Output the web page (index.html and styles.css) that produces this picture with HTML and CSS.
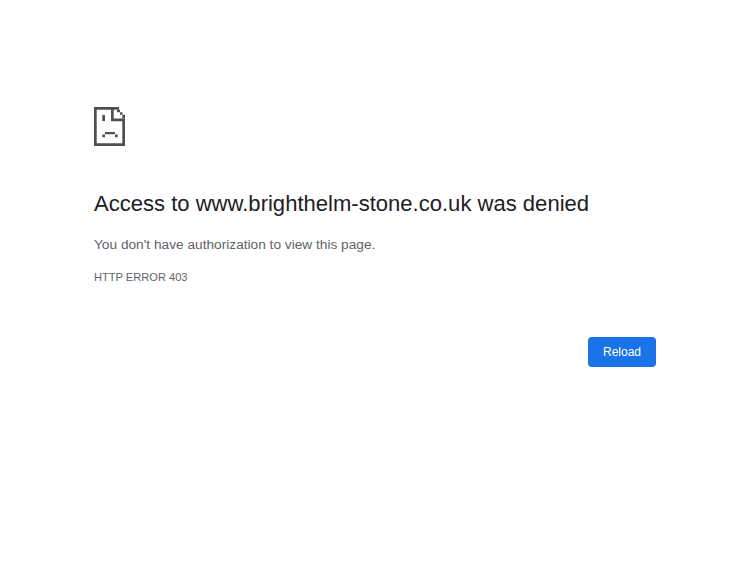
FILE: index.html
```html
<!DOCTYPE html>
<html lang="en">
<head>
<meta charset="utf-8">
<title>www.brighthelm-stone.co.uk</title>
<link rel="stylesheet" href="styles.css">
</head>
<body>
<main class="wrapper">
  <svg class="icon" width="31" height="39" viewBox="0 0 31 39" aria-hidden="true">
    <path fill="#505050" d="M0 0H25V2.7H19.7V11.5H31V39H0ZM2.7 2.7V36.3H28.3V14.2H17V2.7Z"/>
    <path fill="#505050" d="M23 2.7H26V5.2H23ZM26 5.2H28.5V7.7H26ZM28.3 7.7H31V11.5H28.3Z"/>
    <path fill="#505050" d="M8.3 8H11V14H8.3ZM11 25H21V27.2H11ZM8.3 27.5H11V30.3H8.3ZM21 27.5H23.7V30.3H21Z"/>
  </svg>
  <h1 class="title">Access to www.brighthelm-stone.co.uk was denied</h1>
  <p class="message">You don't have authorization to view this page.</p>
  <p class="code">HTTP ERROR 403</p>
  <div class="actions"><button class="reload" type="button">Reload</button></div>
</main>
</body>
</html>
```
FILE: styles.css
```css
html, body {
  margin: 0;
  background: #fff;
}
body {
  font-family: "Liberation Sans", Arial, sans-serif;
  color: #5f6368;
}
.wrapper {
  box-sizing: border-box;
  width: 750px;
  padding: 107px 94px 0;
}
.icon {
  display: block;
}
.title {
  margin: 44px 0 0;
  font-size: 22.05px;
  font-weight: 400;
  line-height: 28px;
  color: #202124;
}
.message {
  margin: 17px 0 0;
  font-size: 13.7px;
  line-height: 20px;
}
.code {
  margin: 14px 0 0;
  font-size: 11.1px;
  line-height: 16px;
}
.actions {
  display: flex;
  justify-content: flex-end;
  margin-top: 52px;
}
.reload {
  width: 68px;
  height: 30px;
  padding: 0;
  border: 0;
  border-radius: 4px;
  background: #1a73e8;
  color: #fff;
  font: 12px "Liberation Sans", Arial, sans-serif;
}
```
